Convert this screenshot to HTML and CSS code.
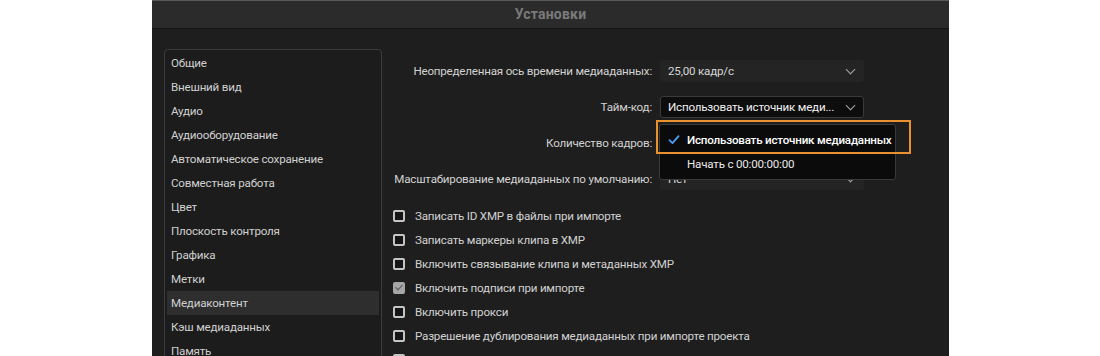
FILE: index.html
```html
<!DOCTYPE html>
<html lang="ru">
<head>
    <meta charset="UTF-8">
    <meta name="viewport" content="width=device-width, initial-scale=1.0">
    <title>Установки</title>
    <link rel="stylesheet" href="styles.css">
</head>
<body>
    <div class="dialog">
        <div class="title-bar">Установки</div>
        <div class="dialog-body">
            <ul class="sidebar">
                <li>Общие</li>
                <li>Внешний вид</li>
                <li>Аудио</li>
                <li>Аудиооборудование</li>
                <li>Автоматическое сохранение</li>
                <li>Совместная работа</li>
                <li>Цвет</li>
                <li>Плоскость контроля</li>
                <li>Графика</li>
                <li>Метки</li>
                <li class="selected">Медиаконтент</li>
                <li>Кэш медиаданных</li>
                <li>Память</li>
            </ul>
            <div class="pane">
                <div class="form-grid">
                    <label>Неопределенная ось времени медиаданных:</label>
                    <div class="select">25,00 кадр/с<span class="chevron"></span></div>

                    <label>Тайм-код:</label>
                    <div class="select open">Использовать источник меди...<span class="chevron"></span></div>

                    <label>Количество кадров:</label>
                    <div class="select"><span class="chevron"></span></div>

                    <label>Масштабирование медиаданных по умолчанию:</label>
                    <div class="select">Нет<span class="chevron"></span></div>
                </div>

                <div class="checks">
                    <div class="check"><span class="box"></span>Записать ID XMP в файлы при импорте</div>
                    <div class="check"><span class="box"></span>Записать маркеры клипа в XMP</div>
                    <div class="check"><span class="box"></span>Включить связывание клипа и метаданных XMP</div>
                    <div class="check"><span class="box checked"></span>Включить подписи при импорте</div>
                    <div class="check"><span class="box"></span>Включить прокси</div>
                    <div class="check"><span class="box"></span>Разрешение дублирования медиаданных при импорте проекта</div>
                    <div class="check"><span class="box"></span>Создавать папки для каждого импорта</div>
                </div>

                <div class="menu">
                    <div class="menu-item active">
                        <svg class="tick" width="12" height="10" viewBox="0 0 12 10">
                            <path d="M1.5 5.2 L4.5 8.2 L10.5 1.2" fill="none" stroke="#4a9cf6" stroke-width="1.8" stroke-linecap="round" stroke-linejoin="round"/>
                        </svg>
                        Использовать источник медиаданных
                    </div>
                    <div class="menu-item">Начать с 00:00:00:00</div>
                </div>
                <div class="focus-ring"></div>
            </div>
        </div>
    </div>
</body>
</html>
```

FILE: styles.css
```css
body {
    margin: 0;
    background-color: #fff;
    font-family: Roboto, "Noto Sans", sans-serif;
    font-size: 11.6px;
    letter-spacing: -0.2px;
    color: #d2d2d2;
}
.dialog {
    margin-left: 152px;
    width: 797px;
    height: 356px;
    overflow: hidden;
    background-color: #1e1e1e;
}
.title-bar {
    height: 27px;
    line-height: 27px;
    border-top: 1px solid #5a5a5a;
    border-bottom: 1px solid #141414;
    background-color: #2b2b2b;
    text-align: center;
    font-weight: bold;
    font-size: 14px;
    letter-spacing: 0.2px;
    color: #7a7a7a;
}
.dialog-body {
    display: flex;
    gap: 11px;
    padding: 20px 0 0 12px;
}
.sidebar {
    list-style: none;
    margin: 0;
    padding: 1px 2px;
    width: 212px;
    flex-shrink: 0;
    border: 1px solid #3c3c3c;
    border-radius: 4px;
    background-color: #1c1c1c;
}
.sidebar li {
    height: 24px;
    line-height: 24px;
    padding-left: 4px;
    color: #d0d0d0;
}
.sidebar li.selected {
    background-color: #2e2e2e;
}
.pane {
    position: relative;
    flex: 1;
    padding-top: 11px;
}
.form-grid {
    display: grid;
    grid-template-columns: 259px 204px;
    column-gap: 8px;
    row-gap: 14px;
    align-items: center;
}
.form-grid label {
    text-align: right;
    white-space: nowrap;
}
.select {
    position: relative;
    height: 22px;
    line-height: 22px;
    padding-left: 8px;
    border-radius: 3px;
    background-color: #242424;
    white-space: nowrap;
    color: #d6d6d6;
}
.select.open {
    box-sizing: border-box;
    line-height: 20px;
    padding-left: 7px;
    border: 1px solid #3a3a3a;
    background-color: #0d0d0d;
    color: #f0f0f0;
}
.chevron {
    position: absolute;
    right: 10px;
    top: 6px;
    width: 6px;
    height: 6px;
    border-right: 1.6px solid #a8a8a8;
    border-bottom: 1.6px solid #a8a8a8;
    transform: rotate(45deg);
}
.select.open .chevron {
    top: 5px;
    right: 9px;
}
.checks {
    margin-top: 14px;
}
.check {
    display: flex;
    align-items: center;
    height: 24px;
    white-space: nowrap;
}
.box {
    box-sizing: border-box;
    width: 12px;
    height: 12px;
    margin: 0 10px 0 0;
    border: 2px solid #c4c4c4;
    border-radius: 2px;
    background-color: #151515;
}
.box.checked {
    position: relative;
    border-color: #a6a6a6;
    background-color: #a6a6a6;
}
.box.checked::after {
    content: "";
    position: absolute;
    left: 2px;
    top: -1px;
    width: 3px;
    height: 6px;
    border-right: 1.5px solid #5a5a5a;
    border-bottom: 1.5px solid #5a5a5a;
    transform: rotate(45deg);
}
.menu {
    position: absolute;
    left: 266px;
    top: 75px;
    width: 235px;
    padding: 3px 0;
    border: 1px solid #3a3a3a;
    border-radius: 3px;
    background-color: #0b0b0b;
}
.menu-item {
    display: flex;
    align-items: center;
    height: 24px;
    padding-left: 27px;
    white-space: nowrap;
    color: #e8e8e8;
}
.menu-item.active {
    padding-left: 8px;
    color: #fff;
    font-weight: 500;
}
.tick {
    margin-right: 7px;
}
.focus-ring {
    position: absolute;
    left: 263px;
    top: 71px;
    width: 251px;
    height: 30px;
    border: 2px solid #e8912e;
}
```
